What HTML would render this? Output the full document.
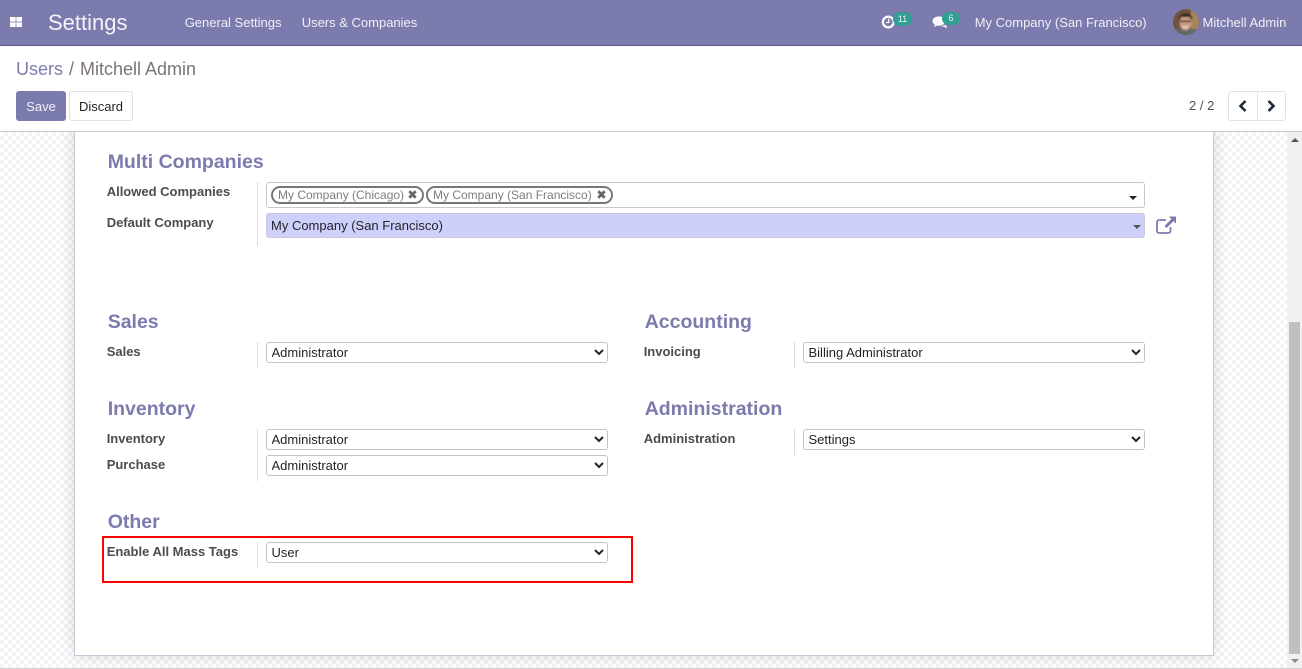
<!DOCTYPE html>
<html><head><meta charset="utf-8"><title>Settings</title>
<style>
*{box-sizing:border-box}
html,body{margin:0;padding:0;width:1302px;height:669px;overflow:hidden;background:#fff;font-family:"Liberation Sans",sans-serif;font-size:13px;color:#212529}
.a{position:absolute;white-space:nowrap}
#nav{left:0;top:0;width:1302px;height:46px;background:#7c7bad;border-bottom:1px solid #5e5d8f}
.nt{color:#f0eff8;font-size:13px;line-height:18px;top:14px}
.bdg{background:#329e94;color:#e6f5f3;font-size:9px;border-radius:8px;height:14px;line-height:14px;text-align:center;top:12px}
#bg{left:0;top:132px;width:1287px;height:536px;overflow:hidden;background-color:#fff;background-image:conic-gradient(#f4f4f4 25%,#fff 0 50%,#f4f4f4 0 75%,#fff 0);background-size:8px 8px}
#sheet{left:74px;top:-12px;width:1140px;height:536px;background:#fff;border:1px solid #c8c8d8;border-top:0;box-shadow:0 0 16px rgba(0,0,0,.14)}
#line{left:0;top:131px;width:1302px;height:1px;background:#c9c9c9}
h2{position:absolute;margin:0;font-size:19.5px;line-height:24px;font-weight:700;color:#7c7bad;white-space:nowrap}
.l{position:absolute;font-weight:700;color:#4c4c4c;font-size:13px;line-height:16px;white-space:nowrap}
.v{position:absolute;width:1px;background:#dcdcdc}
select{position:absolute;height:21px;font:13px "Liberation Sans",sans-serif;color:#212529;background:#fff;border:1px solid #c4c4c4;border-radius:3px;padding:0 0 0 .5px;margin:0}
.tag{position:absolute;top:186px;height:18px;border:2px solid #777;border-radius:9px;font-size:12px;line-height:14px;color:#7d7c82;padding-left:5px;white-space:nowrap}
.btn{position:absolute;top:91px;height:30px;border-radius:3px;line-height:31px;text-align:center;font-size:13px}
</style></head><body>
<div class="a" id="bg"><div class="a" id="sheet"></div></div>
<div class="a" id="line"></div>

<div class="a" id="nav"></div>
<svg class="a" style="left:10px;top:17px" width="12" height="10" viewBox="0 0 12 10"><g fill="#fff"><rect x="0" y="0" width="5.700" height="4.600" rx=".5"/><rect x="6.300" y="0" width="5.700" height="4.600" rx=".5"/><rect x="0" y="5.400" width="5.700" height="4.600" rx=".5"/><rect x="6.300" y="5.400" width="5.700" height="4.600" rx=".5"/></g></svg>
<div class="a" style="left:48px;top:8px;font-size:22px;line-height:30px;color:#f4f4fa">Settings</div>
<div class="a nt" style="left:184.700px">General Settings</div>
<div class="a nt" style="left:301.700px">Users &amp; Companies</div>

<svg class="a" style="left:881px;top:15px" width="15" height="14" viewBox="0 0 15 14"><circle cx="7.300" cy="7" r="5.400" fill="none" stroke="#fff" stroke-width="2.200"/><path d="M7.800 3.500V7.500H5" fill="none" stroke="#fff" stroke-width="1.200"/></svg>
<div class="a bdg" style="left:893px;width:19px">11</div>
<svg class="a" style="left:932px;top:15px" width="16" height="14" viewBox="0 0 16 14"><ellipse cx="7" cy="6" rx="6.500" ry="4.600" fill="#fff"/><path d="M3 9 2 12 6 10ZM9 11.500h3l3 2-1-3.500-3 .5z" fill="#fff"/></svg>
<div class="a bdg" style="left:942px;width:18px;height:13px;line-height:13px">6</div>
<div class="a nt" style="left:974.700px">My Company (San Francisco)</div>
<svg class="a" style="left:1173px;top:9px" width="26" height="26" viewBox="0 0 26 26"><defs><clipPath id="c"><circle cx="13" cy="13" r="13"/></clipPath><filter id="b"><feGaussianBlur stdDeviation=".7"/></filter></defs><g clip-path="url(#c)"><rect width="26" height="26" fill="#6e5340"/><g filter="url(#b)"><rect x="18" width="8" height="26" fill="#a8865c"/><rect y="20" width="26" height="6" fill="#5f6a66"/><ellipse cx="12.500" cy="14" rx="6" ry="7.500" fill="#c89c80"/><path d="M6 11C5 3 20 2 19.500 11L17 8H8Z" fill="#2e2620"/><rect x="7" y="11.500" width="11" height="1.600" fill="#4a3a34"/><path d="M9.500 17.500q3 1.800 6 0" stroke="#f2ece6" stroke-width="1.200" fill="none"/></g></g></svg>
<div class="a nt" style="left:1202.500px">Mitchell Admin</div>

<div class="a" style="left:16px;top:57px;font-size:18px;line-height:24px;color:#7c7bad">Users</div>
<div class="a" style="left:69px;top:57px;font-size:18px;line-height:24px;color:#777">/</div>
<div class="a" style="left:80px;top:57px;font-size:18px;line-height:24px;color:#7a7478">Mitchell Admin</div>
<div class="btn" style="left:16px;width:50px;background:#7c7bad;color:#f0eff8">Save</div>
<div class="btn" style="left:69px;width:64px;background:#fff;border:1px solid #dee2e6;line-height:29px;color:#212529">Discard</div>
<div class="a" style="left:1189px;top:97px;line-height:18px;color:#4c4c4c">2 / 2</div>
<div class="a" style="left:1228px;top:91px;width:58px;height:30px;border:1px solid #dee2e6;border-radius:3px;background:#fff"></div>
<div class="a" style="left:1257px;top:92px;width:1px;height:28px;background:#dee2e6"></div>
<svg class="a" style="left:1238px;top:100px" width="10" height="12" viewBox="0 0 10 12"><path d="M7.500 1 2.500 6 7.500 11" fill="none" stroke="#1f2a36" stroke-width="2.600"/></svg>
<svg class="a" style="left:1266px;top:100px" width="10" height="12" viewBox="0 0 10 12"><path d="M2.500 1 7.500 6 2.500 11" fill="none" stroke="#1f2a36" stroke-width="2.600"/></svg>

<h2 style="left:107.700px;top:150px">Multi Companies</h2>
<div class="l" style="left:106.700px;top:184px">Allowed Companies</div>
<div class="l" style="left:106.700px;top:215px">Default Company</div>
<div class="v" style="left:257px;top:182px;height:64px"></div>
<div class="a" style="left:266px;top:182px;width:879px;height:26px;border:1px solid #c8c8c8;border-radius:3px;background:#fff"></div>
<div class="tag" style="left:271px;width:153px">My Company (Chicago)</div>
<svg class="a" style="left:408px;top:190px" width="9" height="9" viewBox="0 0 9 9"><path d="M1.300 1.300 7.700 7.700M7.700 1.300 1.300 7.700" stroke="#666" stroke-width="2.800"/></svg>
<div class="tag" style="left:426px;width:187px">My Company (San Francisco)</div>
<svg class="a" style="left:597px;top:190px" width="9" height="9" viewBox="0 0 9 9"><path d="M1.300 1.300 7.700 7.700M7.700 1.300 1.300 7.700" stroke="#666" stroke-width="2.800"/></svg>
<div class="a" style="left:1129px;top:196px;border:4px solid transparent;border-top-color:#222;border-bottom:0"></div>
<div class="a" style="left:266px;top:213px;width:879px;height:25px;background:#cfcffb;border:1px solid #c8c8d8;border-radius:3px;padding-left:4px;line-height:23px;color:#212529">My Company (San Francisco)</div>
<div class="a" style="left:1133px;top:225px;border:4px solid transparent;border-top-color:#555;border-bottom:0"></div>
<svg class="a" style="left:1156px;top:216px" width="21" height="19" viewBox="0 0 21 19"><path d="M10 4H3.500Q1 4 1 6.500V14.500Q1 17 3.500 17H12Q14.500 17 14.500 14.500V11" fill="none" stroke="#7c7bad" stroke-width="1.800"/><path d="M13 0.500H20V7.500L17.500 5.200 10.500 12 8.500 10 15.300 3Z" fill="#7c7bad"/></svg>

<h2 style="left:107.700px;top:309.500px">Sales</h2>
<div class="l" style="left:106.700px;top:344px">Sales</div>
<div class="v" style="left:257px;top:342px;height:26px"></div>
<select style="left:266px;top:342px;width:342px"><option>Administrator</option></select>

<h2 style="left:644.700px;top:309.500px">Accounting</h2>
<div class="l" style="left:643.700px;top:344px">Invoicing</div>
<div class="v" style="left:794px;top:342px;height:26px"></div>
<select style="left:803px;top:342px;width:342px"><option>Billing Administrator</option></select>

<h2 style="left:107.700px;top:396.500px">Inventory</h2>
<div class="l" style="left:106.700px;top:431px">Inventory</div>
<div class="l" style="left:106.700px;top:457px">Purchase</div>
<div class="v" style="left:257px;top:429px;height:52px"></div>
<select style="left:266px;top:429px;width:342px"><option>Administrator</option></select>
<select style="left:266px;top:455px;width:342px"><option>Administrator</option></select>

<h2 style="left:644.700px;top:396.500px">Administration</h2>
<div class="l" style="left:643.700px;top:431px">Administration</div>
<div class="v" style="left:794px;top:429px;height:26px"></div>
<select style="left:803px;top:429px;width:342px"><option>Settings</option></select>

<h2 style="left:107.700px;top:509.500px">Other</h2>
<div class="l" style="left:106.700px;top:544px">Enable All Mass Tags</div>
<div class="v" style="left:257px;top:542px;height:26px"></div>
<select style="left:266px;top:542px;width:342px"><option>User</option></select>
<div class="a" style="left:102px;top:536px;width:531px;height:47px;border:2px solid #f00"></div>

<div class="a" style="left:1287px;top:132px;width:15px;height:536px;background:#f0f0f0"></div>
<div class="a" style="left:1289px;top:322px;width:11px;height:332px;background:#bfbfbf"></div>
<div class="a" style="left:1291px;top:138px;border:4px solid transparent;border-bottom-color:#555;border-top:0"></div>
<div class="a" style="left:1291px;top:659px;border:4px solid transparent;border-top-color:#888;border-bottom:0"></div>
<div class="a" style="left:0;top:668px;width:1302px;height:1px;background:#d0d0d0"></div>
</body></html>
